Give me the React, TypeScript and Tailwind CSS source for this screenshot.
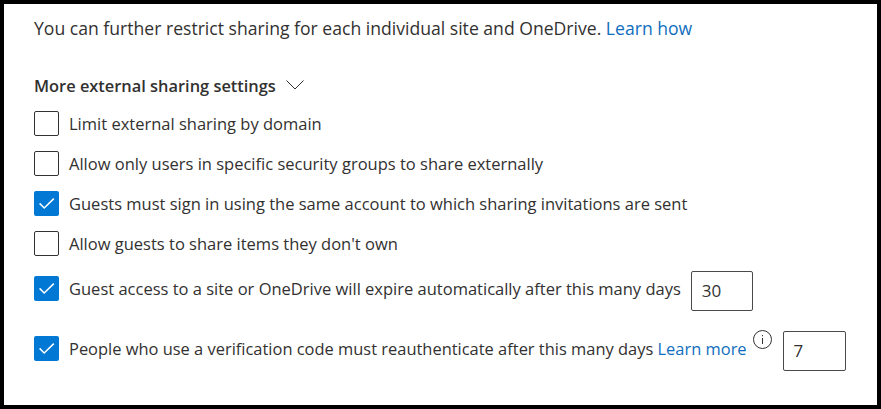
const textColor = 'text-[#323130]';

function Checkbox({ checked }: { checked?: boolean }) {
  if (checked) {
    return (
      <span className="w-[25px] h-[25px] shrink-0 rounded-[2px] bg-[#0078d4] flex items-center justify-center">
        <svg width="17" height="17" viewBox="0 0 17 17" fill="none">
          <path d="M1.6 8.4l4.6 4.6L15.8 3.6" stroke="#fff" strokeWidth="1.5" />
        </svg>
      </span>
    );
  }
  return <span className="w-[25px] h-[25px] shrink-0 rounded-[2px] border border-[#323130] bg-white" />;
}

function NumberBox({ value, width }: { value: string; width: string }) {
  return (
    <div className={`${width} h-10 mt-[6px] shrink-0 rounded-[2px] border border-[#4a4a4a] flex items-center pl-[10px] text-[17px] ${textColor}`}>
      {value}
    </div>
  );
}

const rows = [
  { label: 'Limit external sharing by domain', checked: false },
  { label: 'Allow only users in specific security groups to share externally', checked: false },
  { label: 'Guests must sign in using the same account to which sharing invitations are sent', checked: true },
  { label: "Allow guests to share items they don't own", checked: false },
];

export default function App() {
  return (
    <div
      className={`w-[881px] h-[409px] border-4 border-black bg-white pl-[30px] pt-[12px] text-[16.5px] ${textColor}`}
      style={{ fontFamily: '"Open Sans", sans-serif' }}
    >
      <p className="h-6 leading-6 text-[17.6px]">
        You can further restrict sharing for each individual site and OneDrive.{' '}
        <a className="text-[#106ebe]">Learn how</a>
      </p>

      <div className="mt-[34px] h-6 flex items-center gap-[10px]">
        <span className="font-semibold leading-6 text-[16.4px]">More external sharing settings</span>
        <svg width="18" height="11" viewBox="0 0 18 11" fill="none" className="-mt-[3px] shrink-0">
          <path d="M0.5 1.5l8.5 8.5 8.5-8.5" stroke="#323130" />
        </svg>
      </div>

      <div className="mt-[5px] flex flex-col">
        {rows.map((r) => (
          <div key={r.label} className="h-10 flex items-center gap-[10px]">
            <Checkbox checked={r.checked} />
            <span className="mt-[2px]">{r.label}</span>
          </div>
        ))}

        <div className="mt-[5px] h-10 flex items-center gap-[10px]">
          <Checkbox checked />
          <span className="mt-[3px]">Guest access to a site or OneDrive will expire automatically after this many days</span>
          <NumberBox value="30" width="w-[62px]" />
        </div>

        <div className="mt-[20px] h-10 flex items-center gap-[10px]">
          <Checkbox checked />
          <span className="mt-[3px] text-[16.45px] whitespace-nowrap">
            People who use a verification code must reauthenticate after this many days{' '}
            <a className="text-[#106ebe]">Learn more</a>
          </span>
          <svg width="19" height="19" viewBox="0 0 19 19" fill="none" className="-mt-[17px] -ml-[4px] shrink-0">
            <circle cx="9.5" cy="9.5" r="9" stroke="#323130" />
            <path d="M9.5 8v6" stroke="#323130" />
            <path d="M9.5 5v1.3" stroke="#323130" />
          </svg>
          <NumberBox value="7" width="w-[63px] ml-[1px]" />
        </div>
      </div>
    </div>
  );
}
